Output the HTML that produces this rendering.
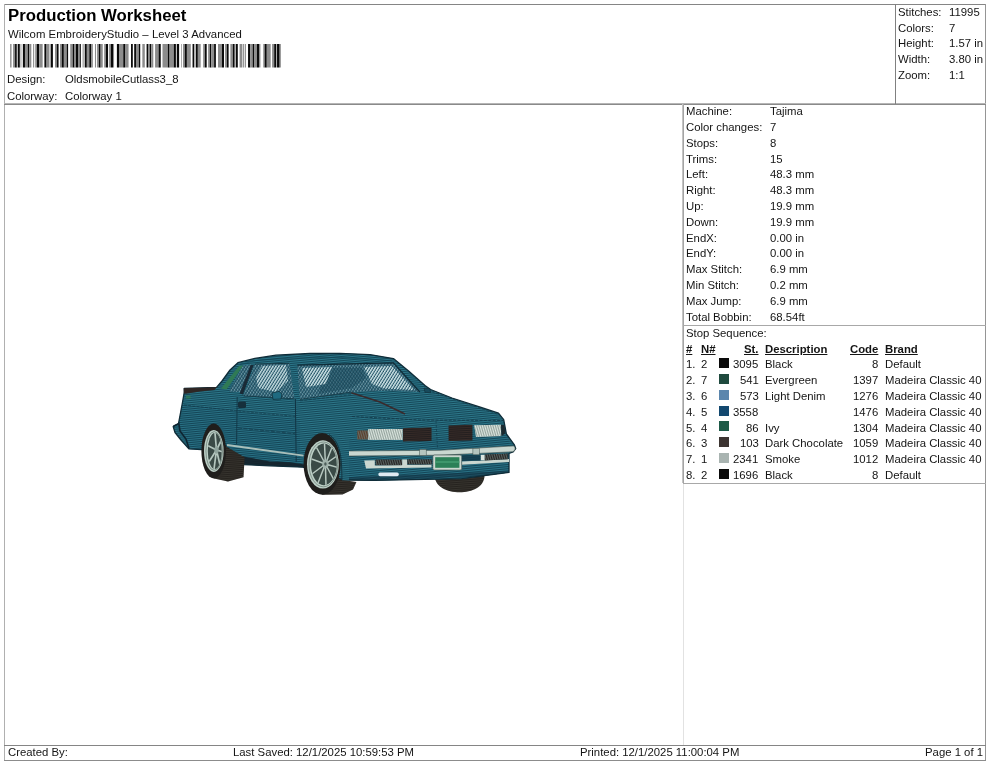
<!DOCTYPE html>
<html><head><meta charset="utf-8"><title>Production Worksheet</title>
<style>
html,body{margin:0;padding:0;background:#fff;}
body{width:990px;height:762px;position:relative;overflow:hidden;font-family:"Liberation Sans",sans-serif;color:#111;}
.t{position:absolute;will-change:transform;font-size:11.35px;line-height:13px;white-space:nowrap;color:#141414;}
.b{font-weight:bold;text-decoration:underline;}
.ln{position:absolute;background:#8a8a8a;}
.sw{position:absolute;width:10px;height:10px;}
svg{position:absolute;}
</style></head><body>

<div class="ln" style="left:4px;top:4px;width:982px;height:1px;background:#858585"></div>
<div class="ln" style="left:4px;top:4px;width:1px;height:757px;background:#b0b0b0"></div>
<div class="ln" style="left:985px;top:4px;width:1px;height:757px;background:#959595"></div>
<div class="ln" style="left:4px;top:760px;width:982px;height:1px;background:#8c8c8c"></div>
<div class="ln" style="left:4px;top:103px;width:982px;height:1px;background:#b5b5b5"></div>
<div class="ln" style="left:4px;top:104px;width:982px;height:1px;background:#8a8a8a"></div>
<div class="ln" style="left:4px;top:745px;width:982px;height:1px;background:#858585"></div>
<div class="ln" style="left:895px;top:4px;width:1px;height:100px;background:#808080"></div>
<div class="ln" style="left:682px;top:104px;width:1px;height:379px;background:#c4c4c4"></div>
<div class="ln" style="left:683px;top:104px;width:1px;height:379px;background:#a4a4a4"></div>
<div class="ln" style="left:683px;top:483px;width:1px;height:262px;background:#e2e2e2"></div>
<div class="ln" style="left:683px;top:325px;width:303px;height:1px;background:#a8a8a8"></div>
<div class="ln" style="left:683px;top:483px;width:303px;height:1px;background:#a8a8a8"></div>
<div class="t" style="left:8.4px;top:6.2px;font-size:16.76px;line-height:19px;font-weight:bold;color:#000">Production Worksheet</div>
<div class="t " style="left:7.7px;top:27.9px;letter-spacing:0.03px">Wilcom EmbroideryStudio – Level 3 Advanced</div>
<div class="t " style="left:7.2px;top:73.3px;">Design:</div>
<div class="t " style="left:64.8px;top:73.3px;">OldsmobileCutlass3_8</div>
<div class="t " style="left:7.2px;top:89.5px;">Colorway:</div>
<div class="t " style="left:64.8px;top:89.5px;">Colorway 1</div>
<svg style="left:0;top:0" width="300" height="80"><rect x="10.12" y="44" width="1.41" height="23.5" fill="#8c8c8c"/><rect x="13.09" y="44" width="1.98" height="23.5" fill="#8c8c8c"/><rect x="15.07" y="44" width="1.77" height="23.5" fill="#0a0a0a"/><rect x="16.84" y="44" width="1.06" height="23.5" fill="#c4c4c4"/><rect x="17.90" y="44" width="1.98" height="23.5" fill="#0a0a0a"/><rect x="19.88" y="44" width="1.91" height="23.5" fill="#c4c4c4"/><rect x="22.85" y="44" width="2.12" height="23.5" fill="#0a0a0a"/><rect x="24.97" y="44" width="2.83" height="23.5" fill="#8c8c8c"/><rect x="27.80" y="44" width="1.41" height="23.5" fill="#0a0a0a"/><rect x="29.21" y="44" width="2.12" height="23.5" fill="#8c8c8c"/><rect x="33.10" y="44" width="1.06" height="23.5" fill="#8c8c8c"/><rect x="35.22" y="44" width="1.77" height="23.5" fill="#8c8c8c"/><rect x="36.99" y="44" width="2.12" height="23.5" fill="#0a0a0a"/><rect x="39.11" y="44" width="3.54" height="23.5" fill="#8c8c8c"/><rect x="44.41" y="44" width="2.12" height="23.5" fill="#0a0a0a"/><rect x="46.54" y="44" width="2.83" height="23.5" fill="#8c8c8c"/><rect x="49.36" y="44" width="1.41" height="23.5" fill="#c4c4c4"/><rect x="50.78" y="44" width="2.12" height="23.5" fill="#0a0a0a"/><rect x="55.02" y="44" width="1.77" height="23.5" fill="#8c8c8c"/><rect x="56.79" y="44" width="1.77" height="23.5" fill="#0a0a0a"/><rect x="59.97" y="44" width="1.77" height="23.5" fill="#8c8c8c"/><rect x="61.74" y="44" width="2.12" height="23.5" fill="#0a0a0a"/><rect x="63.86" y="44" width="2.83" height="23.5" fill="#8c8c8c"/><rect x="66.69" y="44" width="1.41" height="23.5" fill="#0a0a0a"/><rect x="70.22" y="44" width="2.47" height="23.5" fill="#8c8c8c"/><rect x="72.70" y="44" width="1.77" height="23.5" fill="#0a0a0a"/><rect x="74.46" y="44" width="1.41" height="23.5" fill="#8c8c8c"/><rect x="75.88" y="44" width="2.12" height="23.5" fill="#0a0a0a"/><rect x="78.00" y="44" width="1.77" height="23.5" fill="#8c8c8c"/><rect x="79.77" y="44" width="1.06" height="23.5" fill="#0a0a0a"/><rect x="82.60" y="44" width="1.06" height="23.5" fill="#8c8c8c"/><rect x="84.72" y="44" width="2.12" height="23.5" fill="#0a0a0a"/><rect x="86.84" y="44" width="2.47" height="23.5" fill="#8c8c8c"/><rect x="89.31" y="44" width="1.77" height="23.5" fill="#0a0a0a"/><rect x="91.08" y="44" width="1.77" height="23.5" fill="#8c8c8c"/><rect x="94.97" y="44" width="1.06" height="23.5" fill="#8c8c8c"/><rect x="97.09" y="44" width="1.77" height="23.5" fill="#8c8c8c"/><rect x="98.86" y="44" width="1.77" height="23.5" fill="#0a0a0a"/><rect x="100.63" y="44" width="2.12" height="23.5" fill="#8c8c8c"/><rect x="104.16" y="44" width="1.77" height="23.5" fill="#8c8c8c"/><rect x="105.93" y="44" width="2.12" height="23.5" fill="#0a0a0a"/><rect x="109.11" y="44" width="1.77" height="23.5" fill="#8c8c8c"/><rect x="110.88" y="44" width="2.12" height="23.5" fill="#0a0a0a"/><rect x="113.00" y="44" width="1.06" height="23.5" fill="#8c8c8c"/><rect x="116.89" y="44" width="2.12" height="23.5" fill="#0a0a0a"/><rect x="119.01" y="44" width="4.24" height="23.5" fill="#8c8c8c"/><rect x="123.25" y="44" width="1.77" height="23.5" fill="#0a0a0a"/><rect x="125.02" y="44" width="3.54" height="23.5" fill="#8c8c8c"/><rect x="131.03" y="44" width="1.77" height="23.5" fill="#0a0a0a"/><rect x="134.21" y="44" width="1.77" height="23.5" fill="#0a0a0a"/><rect x="135.98" y="44" width="2.83" height="23.5" fill="#8c8c8c"/><rect x="138.81" y="44" width="1.41" height="23.5" fill="#0a0a0a"/><rect x="142.34" y="44" width="2.47" height="23.5" fill="#8c8c8c"/><rect x="146.59" y="44" width="1.41" height="23.5" fill="#0a0a0a"/><rect x="148.00" y="44" width="1.77" height="23.5" fill="#8c8c8c"/><rect x="149.77" y="44" width="1.41" height="23.5" fill="#0a0a0a"/><rect x="151.18" y="44" width="2.12" height="23.5" fill="#8c8c8c"/><rect x="155.07" y="44" width="3.54" height="23.5" fill="#8c8c8c"/><rect x="158.61" y="44" width="2.12" height="23.5" fill="#0a0a0a"/><rect x="162.49" y="44" width="5.30" height="23.5" fill="#8c8c8c"/><rect x="167.80" y="44" width="1.77" height="23.5" fill="#0a0a0a"/><rect x="169.57" y="44" width="4.24" height="23.5" fill="#8c8c8c"/><rect x="173.81" y="44" width="2.12" height="23.5" fill="#0a0a0a"/><rect x="175.93" y="44" width="1.06" height="23.5" fill="#c4c4c4"/><rect x="176.99" y="44" width="2.12" height="23.5" fill="#0a0a0a"/><rect x="181.23" y="44" width="0.71" height="23.5" fill="#8c8c8c"/><rect x="183.00" y="44" width="1.77" height="23.5" fill="#8c8c8c"/><rect x="184.77" y="44" width="2.12" height="23.5" fill="#0a0a0a"/><rect x="186.89" y="44" width="3.89" height="23.5" fill="#8c8c8c"/><rect x="192.55" y="44" width="1.77" height="23.5" fill="#0a0a0a"/><rect x="195.73" y="44" width="2.12" height="23.5" fill="#0a0a0a"/><rect x="197.85" y="44" width="2.83" height="23.5" fill="#8c8c8c"/><rect x="203.15" y="44" width="1.77" height="23.5" fill="#8c8c8c"/><rect x="204.92" y="44" width="1.77" height="23.5" fill="#0a0a0a"/><rect x="208.10" y="44" width="1.77" height="23.5" fill="#8c8c8c"/><rect x="209.87" y="44" width="1.41" height="23.5" fill="#0a0a0a"/><rect x="211.28" y="44" width="2.83" height="23.5" fill="#8c8c8c"/><rect x="214.11" y="44" width="1.77" height="23.5" fill="#0a0a0a"/><rect x="218.00" y="44" width="3.89" height="23.5" fill="#8c8c8c"/><rect x="221.89" y="44" width="2.12" height="23.5" fill="#0a0a0a"/><rect x="225.07" y="44" width="1.77" height="23.5" fill="#8c8c8c"/><rect x="226.84" y="44" width="1.77" height="23.5" fill="#0a0a0a"/><rect x="230.37" y="44" width="2.47" height="23.5" fill="#8c8c8c"/><rect x="232.85" y="44" width="1.77" height="23.5" fill="#0a0a0a"/><rect x="235.68" y="44" width="2.12" height="23.5" fill="#0a0a0a"/><rect x="239.57" y="44" width="2.83" height="23.5" fill="#8c8c8c"/><rect x="243.10" y="44" width="1.06" height="23.5" fill="#8c8c8c"/><rect x="244.87" y="44" width="1.06" height="23.5" fill="#8c8c8c"/><rect x="248.05" y="44" width="2.12" height="23.5" fill="#0a0a0a"/><rect x="250.17" y="44" width="2.47" height="23.5" fill="#8c8c8c"/><rect x="252.65" y="44" width="1.77" height="23.5" fill="#0a0a0a"/><rect x="254.41" y="44" width="2.47" height="23.5" fill="#8c8c8c"/><rect x="256.89" y="44" width="2.12" height="23.5" fill="#0a0a0a"/><rect x="259.01" y="44" width="1.41" height="23.5" fill="#8c8c8c"/><rect x="263.25" y="44" width="1.41" height="23.5" fill="#8c8c8c"/><rect x="264.67" y="44" width="2.12" height="23.5" fill="#0a0a0a"/><rect x="266.79" y="44" width="3.89" height="23.5" fill="#8c8c8c"/><rect x="272.09" y="44" width="2.12" height="23.5" fill="#8c8c8c"/><rect x="274.21" y="44" width="2.12" height="23.5" fill="#0a0a0a"/><rect x="277.04" y="44" width="2.12" height="23.5" fill="#0a0a0a"/><rect x="279.16" y="44" width="1.41" height="23.5" fill="#555"/></svg>
<div class="t " style="left:898px;top:5.7px;">Stitches:</div>
<div class="t " style="left:948.5px;top:5.7px;">11995</div>
<div class="t " style="left:898px;top:21.5px;">Colors:</div>
<div class="t " style="left:948.5px;top:21.5px;">7</div>
<div class="t " style="left:898px;top:37.4px;">Height:</div>
<div class="t " style="left:948.5px;top:37.4px;">1.57 in</div>
<div class="t " style="left:898px;top:53.2px;">Width:</div>
<div class="t " style="left:948.5px;top:53.2px;">3.80 in</div>
<div class="t " style="left:898px;top:69.1px;">Zoom:</div>
<div class="t " style="left:948.5px;top:69.1px;">1:1</div>
<div class="t " style="left:686px;top:105.2px;">Machine:</div>
<div class="t " style="left:769.5px;top:105.2px;">Tajima</div>
<div class="t " style="left:686px;top:121.0px;">Color changes:</div>
<div class="t " style="left:769.5px;top:121.0px;">7</div>
<div class="t " style="left:686px;top:136.8px;">Stops:</div>
<div class="t " style="left:769.5px;top:136.8px;">8</div>
<div class="t " style="left:686px;top:152.6px;">Trims:</div>
<div class="t " style="left:769.5px;top:152.6px;">15</div>
<div class="t " style="left:686px;top:168.4px;">Left:</div>
<div class="t " style="left:769.5px;top:168.4px;">48.3 mm</div>
<div class="t " style="left:686px;top:184.2px;">Right:</div>
<div class="t " style="left:769.5px;top:184.2px;">48.3 mm</div>
<div class="t " style="left:686px;top:200.0px;">Up:</div>
<div class="t " style="left:769.5px;top:200.0px;">19.9 mm</div>
<div class="t " style="left:686px;top:215.8px;">Down:</div>
<div class="t " style="left:769.5px;top:215.8px;">19.9 mm</div>
<div class="t " style="left:686px;top:231.6px;">EndX:</div>
<div class="t " style="left:769.5px;top:231.6px;">0.00 in</div>
<div class="t " style="left:686px;top:247.4px;">EndY:</div>
<div class="t " style="left:769.5px;top:247.4px;">0.00 in</div>
<div class="t " style="left:686px;top:263.2px;">Max Stitch:</div>
<div class="t " style="left:769.5px;top:263.2px;">6.9 mm</div>
<div class="t " style="left:686px;top:279.0px;">Min Stitch:</div>
<div class="t " style="left:769.5px;top:279.0px;">0.2 mm</div>
<div class="t " style="left:686px;top:294.8px;">Max Jump:</div>
<div class="t " style="left:769.5px;top:294.8px;">6.9 mm</div>
<div class="t " style="left:686px;top:310.6px;">Total Bobbin:</div>
<div class="t " style="left:769.5px;top:310.6px;">68.54ft</div>
<div class="t " style="left:686px;top:326.5px;">Stop Sequence:</div>
<div class="t b" style="left:686px;top:342.6px;">#</div>
<div class="t b" style="left:701px;top:342.6px;">N#</div>
<div class="t b" style="right:231.5px;top:342.6px;">St.</div>
<div class="t b" style="left:764.5px;top:342.6px;">Description</div>
<div class="t b" style="right:111.5px;top:342.6px;">Code</div>
<div class="t b" style="left:884.5px;top:342.6px;">Brand</div>
<div class="t " style="left:686px;top:358.3px;">1.</div>
<div class="t " style="left:701px;top:358.3px;">2</div>
<div class="sw" style="left:719px;top:358px;background:#0a0a0a"></div>
<div class="t " style="right:231.5px;top:358.3px;">3095</div>
<div class="t " style="left:764.5px;top:358.3px;">Black</div>
<div class="t " style="right:111.5px;top:358.3px;">8</div>
<div class="t " style="left:884.5px;top:358.3px;">Default</div>
<div class="t " style="left:686px;top:374.1px;">2.</div>
<div class="t " style="left:701px;top:374.1px;">7</div>
<div class="sw" style="left:719px;top:374px;background:#1f4a3e"></div>
<div class="t " style="right:231.5px;top:374.1px;">541</div>
<div class="t " style="left:764.5px;top:374.1px;">Evergreen</div>
<div class="t " style="right:111.5px;top:374.1px;">1397</div>
<div class="t " style="left:884.5px;top:374.1px;">Madeira Classic 40</div>
<div class="t " style="left:686px;top:389.9px;">3.</div>
<div class="t " style="left:701px;top:389.9px;">6</div>
<div class="sw" style="left:719px;top:390px;background:#5b86ad"></div>
<div class="t " style="right:231.5px;top:389.9px;">573</div>
<div class="t " style="left:764.5px;top:389.9px;">Light Denim</div>
<div class="t " style="right:111.5px;top:389.9px;">1276</div>
<div class="t " style="left:884.5px;top:389.9px;">Madeira Classic 40</div>
<div class="t " style="left:686px;top:405.7px;">4.</div>
<div class="t " style="left:701px;top:405.7px;">5</div>
<div class="sw" style="left:719px;top:406px;background:#12486f"></div>
<div class="t " style="right:231.5px;top:405.7px;">3558</div>
<div class="t " style="left:764.5px;top:405.7px;"></div>
<div class="t " style="right:111.5px;top:405.7px;">1476</div>
<div class="t " style="left:884.5px;top:405.7px;">Madeira Classic 40</div>
<div class="t " style="left:686px;top:421.5px;">5.</div>
<div class="t " style="left:701px;top:421.5px;">4</div>
<div class="sw" style="left:719px;top:421px;background:#1d5a47"></div>
<div class="t " style="right:231.5px;top:421.5px;">86</div>
<div class="t " style="left:764.5px;top:421.5px;">Ivy</div>
<div class="t " style="right:111.5px;top:421.5px;">1304</div>
<div class="t " style="left:884.5px;top:421.5px;">Madeira Classic 40</div>
<div class="t " style="left:686px;top:437.3px;">6.</div>
<div class="t " style="left:701px;top:437.3px;">3</div>
<div class="sw" style="left:719px;top:437px;background:#3c3431"></div>
<div class="t " style="right:231.5px;top:437.3px;">103</div>
<div class="t " style="left:764.5px;top:437.3px;">Dark Chocolate</div>
<div class="t " style="right:111.5px;top:437.3px;">1059</div>
<div class="t " style="left:884.5px;top:437.3px;">Madeira Classic 40</div>
<div class="t " style="left:686px;top:453.1px;">7.</div>
<div class="t " style="left:701px;top:453.1px;">1</div>
<div class="sw" style="left:719px;top:453px;background:#a9b4b1"></div>
<div class="t " style="right:231.5px;top:453.1px;">2341</div>
<div class="t " style="left:764.5px;top:453.1px;">Smoke</div>
<div class="t " style="right:111.5px;top:453.1px;">1012</div>
<div class="t " style="left:884.5px;top:453.1px;">Madeira Classic 40</div>
<div class="t " style="left:686px;top:468.9px;">8.</div>
<div class="t " style="left:701px;top:468.9px;">2</div>
<div class="sw" style="left:719px;top:469px;background:#0a0a0a"></div>
<div class="t " style="right:231.5px;top:468.9px;">1696</div>
<div class="t " style="left:764.5px;top:468.9px;">Black</div>
<div class="t " style="right:111.5px;top:468.9px;">8</div>
<div class="t " style="left:884.5px;top:468.9px;">Default</div>
<div class="t " style="left:7.5px;top:745.9px;">Created By:</div>
<div class="t " style="left:233px;top:745.9px;">Last Saved: 12/1/2025 10:59:53 PM</div>
<div class="t " style="left:580px;top:745.9px;">Printed: 12/1/2025 11:00:04 PM</div>
<div class="t " style="right:7px;top:745.9px;">Page 1 of 1</div>
<svg style="left:160px;top:340px" width="370" height="170" viewBox="160 340 370 170">
<defs>
<pattern id="st" width="4" height="1.9" patternUnits="userSpaceOnUse" patternTransform="rotate(5)">
<rect x="0" y="0" width="4" height="0.85" fill="#0e3646" opacity="0.7"/>
<rect x="0" y="1.15" width="4" height="0.5" fill="#4a9aac" opacity="0.5"/>
</pattern>
<pattern id="wh" width="2.5" height="6" patternUnits="userSpaceOnUse" patternTransform="rotate(32)">
<rect x="0" y="0" width="1.3" height="6" fill="#d4e8ea"/>
</pattern>
<pattern id="wh2" width="2.5" height="6" patternUnits="userSpaceOnUse" patternTransform="rotate(32)">
<rect x="0" y="0" width="1.1" height="6" fill="#8fb7c0" opacity="0.75"/>
</pattern>
<pattern id="wh3" width="2.6" height="6" patternUnits="userSpaceOnUse" patternTransform="rotate(-40)">
<rect x="0" y="0" width="1.0" height="6" fill="#123848" opacity="0.55"/>
</pattern>
<pattern id="vs" width="1.7" height="6" patternUnits="userSpaceOnUse" patternTransform="rotate(12)">
<rect x="0" y="0" width="0.7" height="6" fill="#71827c" opacity="0.8"/>
</pattern>
<pattern id="hs" width="6" height="2" patternUnits="userSpaceOnUse" patternTransform="rotate(3)">
<rect x="0" y="0" width="6" height="0.7" fill="#5a4038" opacity="0.45"/>
</pattern>
<pattern id="ts" width="6" height="2" patternUnits="userSpaceOnUse" patternTransform="rotate(4)">
<rect x="0" y="0" width="6" height="0.7" fill="#4a4640" opacity="0.6"/>
</pattern>
<clipPath id="bodyclip"><path id="bodyp" d="M184.3,392 L184.2,388.4 L216.5,387.4 L222,381 L230,370 L237.9,362.7 L254.9,358.4 L276,355.2 L310,353.5 L340,353.3 L370,354.6 L393.4,358.6 L408.6,371 L425,385.5 L430.6,389.5 L452,398 L480.3,407.2 L498.5,413.2 L503.7,419.7 L506.4,434 L514.2,444.6 L515.7,448.6 L513,452 L509,453.5 L509,472.4 L461.7,478.7 L375,480.4 L342,480 L303,467.2 L270,465.8 L243.5,464.6 L201.5,449.5 L188.9,448.9 L181,440 L175,432.5 L173.2,426.5 L178.5,423.5 L182,405 Z"/></clipPath>
<clipPath id="rimr"><ellipse cx="214.8" cy="451" rx="7" ry="18"/></clipPath>
<clipPath id="rimf"><ellipse cx="323.9" cy="464.4" rx="12.9" ry="20.8"/></clipPath>
</defs>
<!-- far front-right tyre -->
<path d="M434.5,476 L484.5,476 C484,487 472,492.2 459.5,492.2 C447,492.2 435.5,487 434.5,476 Z" fill="#26231f"/>
<path d="M434.5,476 L484.5,476 C484,487 472,492.2 459.5,492.2 C447,492.2 435.5,487 434.5,476 Z" fill="url(#ts)"/>
<!-- body -->
<use href="#bodyp" fill="#21697b"/>
<g clip-path="url(#bodyclip)">
<!-- shading -->
<path d="M173,424 L182,404 L300,420 L300,470 L190,450 Z" fill="#185a70" opacity="0.5"/>
<path d="M345,440 L509,436 L509,480 L345,482 Z" fill="#185a70" opacity="0.35"/>
<rect x="160" y="340" width="370" height="170" fill="url(#st)"/>
<!-- under-body shadow -->
<path d="M242,456.2 L270,461.4 L290,462.2 L305,464.6 L305,469 L270,467 L242,466 Z" fill="#15222a" opacity="0.92"/>
<path d="M340,477.5 L509,471 L509,475 L340,482 Z" fill="#123040" opacity="0.55"/>
</g>
<use href="#bodyp" fill="none" stroke="#0f2c38" stroke-width="1.3" stroke-linejoin="round"/>
<!-- spoiler -->
<path d="M183.9,393.6 L183.8,388.2 L216.8,387.2 L214.5,390 L200,391.6 L186,393.8 Z" fill="#2e2624"/>
<rect x="186" y="395.6" width="4.6" height="3" fill="#2f7a55" opacity="0.8"/>
<!-- green quarter strip -->
<path d="M221,388.5 L239,366 L243.2,365.4 L226.5,389.5 Z" fill="#2f7a55"/>
<!-- quarter window -->
<path d="M243.2,365.6 L251,364.6 L241.5,392 L229,391.5 Z" fill="#245a6e"/>
<path d="M243.2,365.6 L251,364.6 L241.5,392 L229,391.5 Z" fill="url(#wh2)"/>
<!-- side window -->
<path d="M254.9,364.1 L289.5,363.3 L294.3,398.8 L243.5,395.9 Z" fill="#245a6e"/>
<path d="M254.9,364.1 L289.5,363.3 L294.3,398.8 L243.5,395.9 Z" fill="url(#wh2)"/>
<path d="M254.9,364.1 L289.5,363.3 L294.3,398.8 L243.5,395.9 Z" fill="url(#wh3)"/>
<path d="M243.2,365.6 L251,364.6 L241.5,392 L229,391.5 Z" fill="url(#wh3)"/>
<path d="M262,366 L286,365 L288,381 L276,392 L258,388 L256,376 Z" fill="url(#wh)" opacity="0.9"/>
<!-- dark frame bar -->
<path d="M250.6,365 L253.6,365 L243,394.5 L239.6,393.5 Z" fill="#1a2a36"/>
<!-- windshield -->
<path d="M297.3,365.2 L393.4,362.8 L419.8,392 L387,390.6 L352,392 L300,399.4 Z" fill="#245a6e"/>
<path d="M297.3,365.2 L393.4,362.8 L419.8,392 L387,390.6 L352,392 L300,399.4 Z" fill="url(#wh2)"/>
<path d="M333,368 L362,367.4 L366,378 L352,388 L318,394 L322,384 Z" fill="#1d4f60" opacity="0.55"/>
<path d="M297.3,365.2 L393.4,362.8 L419.8,392 L387,390.6 L352,392 L300,399.4 Z" fill="url(#wh3)"/>
<path d="M302,368 L332,367 L326,384 L306,387 Z" fill="url(#wh)"/>
<path d="M364,367 L392,366 L414,390 L384,388.5 L372,384 Z" fill="url(#wh)"/>
<!-- window outlines -->
<path d="M297.3,365.2 L393.4,362.8 L419.8,392" fill="none" stroke="#0f2c38" stroke-width="1.2"/>
<path d="M254.9,364.1 L289.5,363.3" fill="none" stroke="#123440" stroke-width="0.9"/>
<path d="M243.5,395.9 L294.3,398.8 M300,399.4 L352,392" fill="none" stroke="#123440" stroke-width="0.8"/>
<!-- roof inner line -->
<path d="M240,364.5 L256,360.5 L290,358.2 L340,357.4 L392,360.8" fill="none" stroke="#124052" stroke-width="0.7" opacity="0.8"/>
<!-- mirror left -->
<path d="M272,393 L279,391.4 L282,394 L281,399 L273,399.4 Z" fill="#1f6a80" stroke="#12323e" stroke-width="0.8"/>
<!-- right mirror -->
<path d="M424,388 L429.6,388.6 L430.8,392.6 L425,392.4 Z" fill="#174a5c" stroke="#12323e" stroke-width="0.7"/>
<!-- wiper / hood line -->
<path d="M351.4,392.7 L380,402 L405,414" fill="none" stroke="#3a2a2c" stroke-width="1.5"/>
<!-- seams -->
<path d="M295.4,399 L296.2,462" fill="none" stroke="#113444" stroke-width="1"/>
<path d="M237.2,397 L236.6,444" fill="none" stroke="#113444" stroke-width="0.9"/>
<path d="M184,405 L237,411 L296,416.5" fill="none" stroke="#113444" stroke-width="0.7" stroke-dasharray="3 1.2" opacity="0.8"/>
<path d="M238,428 L295,433.7" fill="none" stroke="#113444" stroke-width="0.8" stroke-dasharray="4 1.5" opacity="0.8"/>
<path d="M352,416.5 L420,420 L503,420.5" fill="none" stroke="#113444" stroke-width="0.9" stroke-dasharray="3 1.4" opacity="0.85"/>
<path d="M300,401 L352,394.5 M432,392 L500,415" fill="none" stroke="#113444" stroke-width="0.7" stroke-dasharray="3 1.4" opacity="0.7"/>
<path d="M436,421 L437.5,448" fill="none" stroke="#113444" stroke-width="0.8" stroke-dasharray="2.5 1.5" opacity="0.7"/>
<!-- door handle -->
<rect x="238" y="401.6" width="8" height="6.5" rx="1.5" fill="#16303c"/>
<!-- sill stripe -->
<path d="M227,445 L303.5,455.6" fill="none" stroke="#a9bfba" stroke-width="1.9"/>
<!-- rear bumper outline -->
<path d="M173.4,426.2 L178.8,423.6 L180,431 L186,439 L189,448.5" fill="none" stroke="#0e2430" stroke-width="1.6"/>
<!-- headlights / grille -->
<rect x="357.3" y="430.5" width="10.8" height="8.9" fill="#5b3e2c"/>
<rect x="357.3" y="430.5" width="10.8" height="8.9" fill="url(#vs)"/>
<rect x="368.2" y="429" width="34.4" height="10.9" fill="#dbe5df"/>
<rect x="368.2" y="429" width="34.4" height="10.9" fill="url(#vs)"/>
<path d="M403,428.2 L431.5,427.4 L431.5,441 L403,441.6 Z" fill="#241f1f"/>
<path d="M403,428.2 L431.5,427.4 L431.5,441 L403,441.6 Z" fill="url(#hs)"/>
<path d="M448.6,425.6 L472.4,424.8 L472.4,440.4 L448.6,441 Z" fill="#241f1f"/>
<path d="M448.6,425.6 L472.4,424.8 L472.4,440.4 L448.6,441 Z" fill="url(#hs)"/>
<path d="M474.2,425.2 L501,424.8 L501.4,436 L476,437 Z" fill="#dbe5df"/>
<path d="M474.2,425.2 L501,424.8 L501.4,436 L476,437 Z" fill="url(#vs)"/>
<path d="M501,424.8 L504.4,425 L505.4,433.5 L501.4,436 Z" fill="#1c2a30"/>
<!-- bumper -->
<path d="M347.4,451.6 C347,453.6 347.6,455.4 349.5,456 L440,455.2 L512.5,451.8 C515.6,450.6 516,447.2 513.5,445.9 L440,450.3 L349.5,451 Z" fill="#cad7d0" stroke="#3d4f4c" stroke-width="0.6"/>
<rect x="419.6" y="449.4" width="6.6" height="6" fill="#b5c5be" stroke="#3d4f4c" stroke-width="0.5"/>
<rect x="472.9" y="448.6" width="6.4" height="6.2" fill="#b5c5be" stroke="#3d4f4c" stroke-width="0.5"/>
<!-- lower grille -->
<path d="M364.2,460.4 L374.8,460.2 L374.8,465.6 L431.5,464.6 L431.5,467.6 L366,468.6 Z" fill="#cad7d0"/>
<rect x="375.6" y="459.6" width="26.6" height="5.6" fill="#262424"/>
<rect x="375.6" y="459.6" width="26.6" height="5.6" fill="url(#vs)"/>
<rect x="402.2" y="459.4" width="5" height="7.8" fill="#cad7d0"/>
<rect x="407.4" y="459.4" width="24.4" height="5" fill="#262424"/>
<rect x="407.4" y="459.4" width="24.4" height="5" fill="url(#vs)"/>
<path d="M462,461.6 L509,459 L509,462 L462,464.8 Z" fill="#cad7d0"/>
<rect x="480.6" y="454.8" width="4.2" height="5.2" fill="#dbe5df"/>
<path d="M484.8,454.6 L507.8,453.6 L507.8,459.2 L484.8,460.4 Z" fill="#262424"/>
<path d="M484.8,454.6 L507.8,453.6 L507.8,459.2 L484.8,460.4 Z" fill="url(#vs)"/>
<rect x="462" y="455.2" width="18.6" height="5.6" fill="#143848" opacity="0.8"/>
<!-- plate -->
<rect x="432.9" y="455" width="28.8" height="15" rx="1.6" fill="#cad7d0" stroke="#3d4f4c" stroke-width="0.6"/>
<rect x="435.2" y="457.2" width="24.2" height="10.6" fill="#2c8058"/>
<rect x="435.2" y="461" width="24.2" height="2" fill="#46a074" opacity="0.7"/>
<!-- fog light -->
<rect x="378.4" y="472.4" width="20.4" height="3.8" rx="1.6" fill="#dfeaf2"/>
<!-- rear wheel -->
<path d="M224,444 L227.5,447.2 L244.6,457.3 L243.5,477.2 L228,481.4 L214,478.6 Z" fill="#26231f"/>
<path d="M224,444 L227.5,447.2 L244.6,457.3 L243.5,477.2 L228,481.4 L214,478.6 Z" fill="url(#ts)"/>
<ellipse cx="213.7" cy="451" rx="12.3" ry="27.4" fill="#1f1e1c"/>
<ellipse cx="213.8" cy="451" rx="9.8" ry="21" fill="#bdd0c7"/>
<ellipse cx="214.2" cy="451" rx="8.3" ry="19.4" fill="none" stroke="#55665f" stroke-width="0.6"/>
<ellipse cx="214.8" cy="451" rx="7" ry="18" fill="#3a4a46"/>
<g clip-path="url(#rimr)" stroke="#b4c6be" stroke-width="1.7" fill="none" stroke-linecap="round">
<path d="M216.5,450 L215,433 M216.5,450 L222,439 M216.5,450 L223,452 M216.5,450 L220,465 M216.5,450 L214,469 M216.5,450 L209.5,461 M216.5,450 L208.5,446"/>
</g>
<ellipse cx="216.5" cy="450" rx="2.2" ry="3.8" fill="#8fa39c"/>
<!-- front wheel -->
<path d="M336,470 L340,479.6 L356.4,482 L353,489.5 L342.5,494.6 L322,494.8 Z" fill="#26231f"/>
<path d="M336,470 L340,479.6 L356.4,482 L353,489.5 L342.5,494.6 L322,494.8 Z" fill="url(#ts)"/>
<ellipse cx="322.1" cy="463.9" rx="18.5" ry="30.8" fill="#1f1e1c"/>
<ellipse cx="322.9" cy="464.4" rx="15.9" ry="24.1" fill="#bdd0c7"/>
<ellipse cx="323.3" cy="464.4" rx="14.3" ry="22.4" fill="none" stroke="#55665f" stroke-width="0.6"/>
<ellipse cx="323.9" cy="464.4" rx="12.9" ry="20.8" fill="#3a4a46"/>
<g clip-path="url(#rimf)" stroke="#b6c7bf" stroke-width="1.5" fill="none" stroke-linecap="round">
<path d="M325.4,464 L324.5,443 M325.4,464 L332.5,446 M325.4,464 L337.5,455.5 M325.4,464 L338,467.5 M325.4,464 L334,480 M325.4,464 L326,486 M325.4,464 L318,483 M325.4,464 L312,474 M325.4,464 L311.5,459 M325.4,464 L316.5,447.5"/>
</g>
<ellipse cx="325.4" cy="464" rx="3.2" ry="4.2" fill="#9fb1aa"/>
<ellipse cx="325.4" cy="464" rx="1.2" ry="1.8" fill="#4d5e59"/>
<!-- fender over front wheel right side -->
<path d="M329,434.5 C338,440 341,452 341.6,466 L342,480.2 L349,480.2 L349,440 Z" fill="#21697b"/>
<path d="M329,434.5 C338,440 341,452 341.6,466 L342,480.2 L349,480.2 L349,440 Z" fill="url(#st)"/>
<path d="M329,434.5 C338,440 341,452 341.6,466 L342,480" fill="none" stroke="#12323e" stroke-width="0.9"/>
</svg>

</body></html>
